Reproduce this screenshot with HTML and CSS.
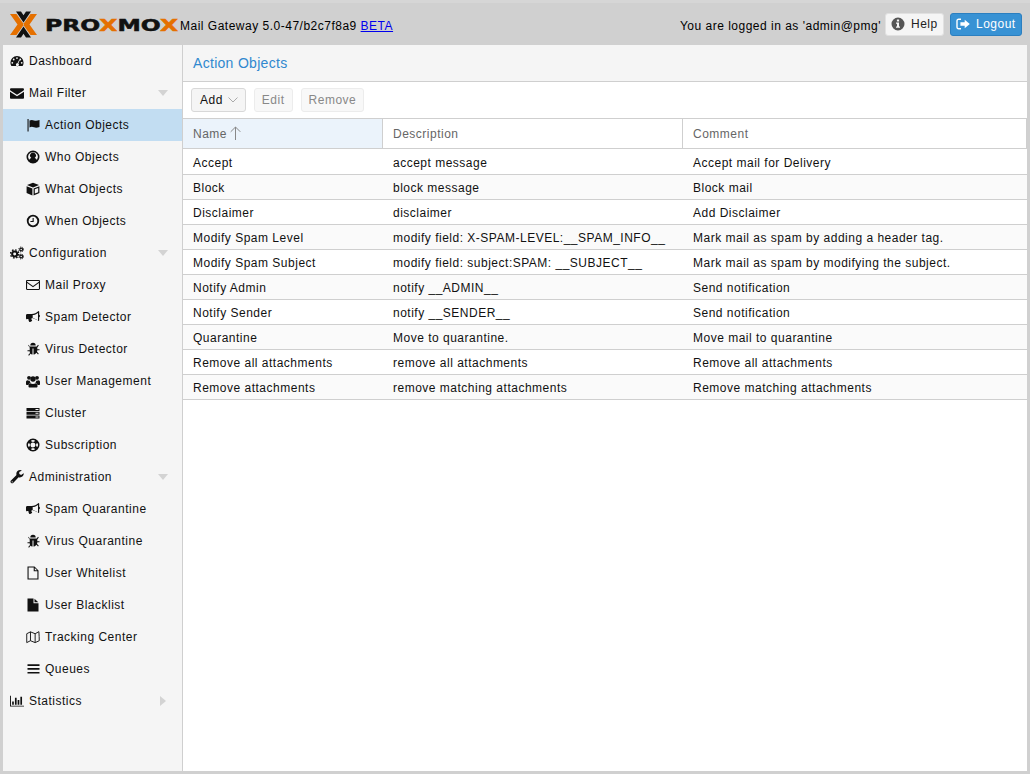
FILE: index.html
```html
<!DOCTYPE html>
<html lang="en">
<head>
    <meta charset="UTF-8">
    <title>Proxmox Mail Gateway</title>
    <link rel="stylesheet" href="styles.css">
</head>
<body>
    <svg class="defs" width="0" height="0">
        <symbol id="i-dashboard" viewBox="0 0 14 14"><path fill-rule="evenodd" d="M7 2a6.6 6.6 0 0 0-6.6 6.7c0 1.300.4 2.400 1 3.300h11.200c.6-.9 1-2 1-3.300A6.600 6.600 0 0 0 7 2zM7 3.200a.9.9 0 1 1 0 1.800.9.9 0 0 1 0-1.800zM3.700 4.600a.9.9 0 1 1 0 1.800.9.9 0 0 1 0-1.800zM10.300 4.600a.9.9 0 1 1 0 1.800.9.9 0 0 1 0-1.800zM2.300 7.900a.9.9 0 1 1 0 1.800.9.9 0 0 1 0-1.800zM11.700 7.900a.9.9 0 1 1 0 1.800.9.9 0 0 1 0-1.800zM9.300 5.500l.7.300-1.700 3.700a1.500 1.500 0 1 1-.8-.3z"/></symbol>
        <symbol id="i-envelope" viewBox="0 0 14 14"><path d="M1.200 2.200h11.600c.6 0 1.200.5 1.200 1.200 0 .5-.3 1-.8 1.300L7 8.700.8 4.700C.3 4.400 0 3.900 0 3.400c0-.7.600-1.200 1.200-1.200zM0 5.700l7 4.500 7-4.500v6c0 .6-.5 1.100-1.200 1.100H1.200C.5 12.800 0 12.300 0 11.700z"/></symbol>
        <symbol id="i-flag" viewBox="0 0 14 14"><path d="M1.500 1h1.100v12.500H1.500zM3.500 2.600c1.500-.9 3-.9 4.500-.2s3 .6 5.500-.3v6.800c-2.500 1-4 1-5.500.3S5 8.500 3.500 9.400z"/></symbol>
        <symbol id="i-user" viewBox="0 0 14 14"><path fill-rule="evenodd" d="M7 .5a6.500 6.500 0 1 1 0 13 6.500 6.500 0 0 1 0-13zM7 2a5 5 0 0 0-3.900 8.100c.5-1.300 1.300-2 2.200-2.200a2.900 2.900 0 1 1 3.400 0c.9.200 1.700.9 2.200 2.200A5 5 0 0 0 7 2z"/></symbol>
        <symbol id="i-cube" viewBox="0 0 14 14"><path d="M7 .8l6 2.300L7 5.500 1 3.100zM.6 4.200l5.800 2.300v7L.6 11zM7.600 6.500l5.800-2.300V11l-5.800 2.500zM8.800 7.300v4.300l3.400-1.400V6z"/></symbol>
        <symbol id="i-clock" viewBox="0 0 14 14"><path fill-rule="evenodd" d="M7 .8a6.200 6.200 0 1 1 0 12.400A6.200 6.200 0 0 1 7 .8zM7 2.600a4.400 4.400 0 1 0 0 8.800 4.400 4.400 0 0 0 0-8.800zM6.600 3.900h1.100v4H4.400V6.900h2.200z"/></symbol>
        <symbol id="i-cogs" viewBox="0 0 15 14"><circle cx="5" cy="8" r="2.700" fill="none" stroke="currentColor" stroke-width="2.200"/><circle cx="5" cy="8" r="4.400" fill="none" stroke="currentColor" stroke-width="1.500" stroke-dasharray="1.700 1.750"/><circle cx="12" cy="3.200" r="1.500" fill="none" stroke="currentColor" stroke-width="1.300"/><circle cx="12" cy="3.200" r="2.600" fill="none" stroke="currentColor" stroke-width="1" stroke-dasharray="1.100 1"/><circle cx="12" cy="10.800" r="1.500" fill="none" stroke="currentColor" stroke-width="1.300"/><circle cx="12" cy="10.800" r="2.600" fill="none" stroke="currentColor" stroke-width="1" stroke-dasharray="1.100 1"/></symbol>
        <symbol id="i-envelope-o" viewBox="0 0 14 14"><path fill-rule="evenodd" d="M1.200 2h11.600c.7 0 1.200.5 1.200 1.200v7.600c0 .7-.5 1.200-1.200 1.200H1.200C.5 12 0 11.500 0 10.800V3.200C0 2.500.5 2 1.200 2zM1.100 3.100v.7L7 8l5.900-4.200v-.7zM12.900 5.100L7 9.300 1.100 5.100v5.800h11.800z"/></symbol>
        <symbol id="i-bullhorn" viewBox="0 0 14 14"><path fill-rule="evenodd" d="M12.500 1c.4 0 .7.300.7.700v3.100c.5.200.8.600.8 1.200s-.3 1-.8 1.200v3.100c0 .4-.3.700-.7.700-2-1.700-4.200-2.700-6.400-2.900-.6.200-.8.900-.6 1.400.2.400.4.700.7 1-.2.500-.7.900-1.300 1-.4.500-1 .6-1.500.4-.7-.7-1-1.800-1-2.900H1.300C.6 9.500 0 8.900 0 8.200V5.300C0 4.600.600 4 1.300 4h4.400c2.500 0 4.800-1 6.800-3zM12 2.900C10.400 4.100 8.600 4.900 6.700 5.100v3.300c1.900.2 3.700 1 5.300 2.200z"/></symbol>
        <symbol id="i-bug" viewBox="0 0 14 14"><path d="M4.300 3.400a2.700 2.700 0 0 1 5.400 0zM3.300 4.400h7.400l1.300-1.600.8.700-1.500 1.900v1.800h2.200v1h-2.200c0 .6-.1 1.100-.3 1.600l1.800 1.900-.8.700-1.500-1.700C9.500 11.800 8.600 12.500 7.500 12.600V6.500h-1v6.100c-1.100-.1-2-.8-2-.8l-1.500 1.900-.8-.7 1.800-2.100c-.2-.5-.3-1-.3-1.600H1.500v-1h2.200V5.400L2.200 3.500l.8-.7z"/></symbol>
        <symbol id="i-users" viewBox="0 0 14 14"><circle cx="3" cy="3.800" r="1.900"/><circle cx="11" cy="3.800" r="1.900"/><circle cx="7" cy="5" r="2.700"/><path d="M3.700 6.500c0 .9.400 1.700 1 2.200-1.100.3-1.900 1.100-2.300 2.200H1c-.6 0-1-.3-1-1V8c0-1 .7-1.800 1.600-1.800.4.300.9.500 1.400.5.300 0 .5 0 .7-.2zM10.300 6.500c.2.100.4.200.7.200.5 0 1-.2 1.400-.5.900 0 1.600.8 1.600 1.800v1.900c0 .7-.4 1-1 1h-1.400c-.4-1.100-1.200-1.900-2.300-2.200.6-.5 1-1.300 1-2.200zM4.400 9.200c.7.500 1.600.8 2.600.8s1.900-.3 2.600-.8c1.200.2 1.900 1.300 1.900 2.600v.7c0 .7-.5 1-1.200 1H3.700c-.7 0-1.200-.3-1.200-1v-.7c0-1.300.7-2.400 1.900-2.600z"/></symbol>
        <symbol id="i-server" viewBox="0 0 14 14"><path fill-rule="evenodd" d="M.5 2h13v3h-13zM.5 5.700h13v3h-13zM.5 9.400h13v3h-13zM9.500 3v1h3V3zM9.500 6.700v1h3v-1zM9.500 10.400v1h3v-1z"/></symbol>
        <symbol id="i-lifering" viewBox="0 0 14 14"><path fill-rule="evenodd" d="M7 .5a6.500 6.500 0 1 1 0 13 6.500 6.500 0 0 1 0-13zM7 4.500a2.500 2.500 0 1 0 0 5 2.500 2.500 0 0 0 0-5zM5.200 2.300L5.800 4a3.300 3.300 0 0 1 2.400 0l.6-1.700a5 5 0 0 0-3.600 0zM2.300 5.200A5 5 0 0 0 2.300 8.800L4 8.200a3.300 3.300 0 0 1 0-2.400zM11.700 5.200L10 5.800a3.300 3.300 0 0 1 0 2.400l1.700.6a5 5 0 0 0 0-3.600zM5.800 10l-.6 1.700a5 5 0 0 0 3.600 0L8.200 10a3.300 3.300 0 0 1-2.400 0z"/></symbol>
        <symbol id="i-wrench" viewBox="0 0 14 14"><path fill-rule="evenodd" d="M13.800 3.600c0 2.200-1.700 3.900-3.900 3.900-.5 0-.9-.1-1.300-.2l-5.200 5.500c-.7.700-1.800.7-2.400 0-.7-.7-.7-1.800 0-2.400l5.500-5.300c-.1-.4-.2-.8-.2-1.300C6.300 1.700 8.200 0 10.200 0c.6 0 1.200.2 1.700.5L9.300 2v2l1.800 1 2.500-1.700c.1.100.2.200.2.300zM2.200 11.200a.6.600 0 1 0 0 1.200.6.600 0 0 0 0-1.200z"/></symbol>
        <symbol id="i-file-o" viewBox="0 0 14 14"><path fill-rule="evenodd" d="M1.500 .5h7l4 4v9h-11zM2.600 1.600v10.800h8.800V5.300H7.700V1.600zM8.800 1.900v2.300h2.300z"/></symbol>
        <symbol id="i-file" viewBox="0 0 14 14"><path d="M1.500 .5h6v4.700h5v8.300h-11zM8.500 .7l3.800 3.500H8.500z"/></symbol>
        <symbol id="i-map" viewBox="0 0 15 14"><path fill="none" stroke="currentColor" stroke-width="1" d="M.8 3.500l4-2 5 2 4-2.200c.3 3.500.4 7 .4 9.700l-4.400 2-5-2-4 2c0-3.200-.1-6.400 0-9.500zM4.800 1.500v9.500M9.800 3.500V13"/></symbol>
        <symbol id="i-bars" viewBox="0 0 14 14"><path d="M1.500 2.300h12v1.700h-12zM1.500 6.100h12v1.700h-12zM1.500 9.900h12v1.700h-12z"/></symbol>
        <symbol id="i-chart" viewBox="0 0 15 14"><path d="M0 1.500h1v10.500h14v1H0zM2.300 7.500h1.800v3.500H2.300zM5.300 3.500h1.800v7.500H5.300zM8.200 6h1.800v5H8.200zM11.100 2.500h1.800v8.500h-1.800z"/></symbol>
        <symbol id="i-info" viewBox="0 0 14 14"><path fill-rule="evenodd" d="M7 .5a6.500 6.500 0 1 1 0 13 6.500 6.500 0 0 1 0-13zM5.900 2.500v1.900h2.200V2.500zM5 5.500v1.300h1v2.700H5v1.300h4V9.500H8V5.500z"/></symbol>
        <symbol id="i-signout" viewBox="0 0 14 14"><path d="M5 1.500v1.400H2.700c-.6 0-1 .4-1 1v6.200c0 .6.400 1 1 1H5v1.400H2.700C1.200 12.500.3 11.600.3 10.100V3.900C.3 2.400 1.200 1.500 2.700 1.500zM8.700 2.800L13.800 7l-5.100 4.200V8.800H4.400V5.200h4.300z"/></symbol>
    </svg>

    <div class="header">
        <svg class="logo" width="170" height="27" viewBox="0 0 170 27">
            <path class="logo-orange" d="M0 3h6.500L14 13.500 6.500 24H0l7.500-10.500zM27 3h-6.500L13 13.500 20.500 24H27l-7.500-10.500z"/>
            <path class="logo-black" d="M6 .5h5l2.500 3.800L16 .5h5l-7.500 11zM6 26.500h5l2.500-3.800 2.500 3.800h5l-7.500-11z"/>
            <text class="logo-word" x="35" y="20" textLength="133" lengthAdjust="spacingAndGlyphs">PRO<tspan class="logo-x">X</tspan>MO<tspan class="logo-x">X</tspan></text>
        </svg>
        <span class="version">Mail Gateway 5.0-47/b2c7f8a9 <a href="#">BETA</a></span>
        <span class="logged">You are logged in as 'admin@pmg'</span>
        <button class="btn-help"><svg class="ico-sm"><use href="#i-info"/></svg>Help</button>
        <button class="btn-logout"><svg class="ico-sm"><use href="#i-signout"/></svg>Logout</button>
    </div>

    <div class="main">
        <div class="nav">
            <div class="nav-item"><svg class="ico"><use href="#i-dashboard"/></svg>Dashboard</div>
            <div class="nav-item"><svg class="ico"><use href="#i-envelope"/></svg>Mail Filter<i class="arrow-down"></i></div>
            <div class="nav-item sub selected"><svg class="ico"><use href="#i-flag"/></svg>Action Objects</div>
            <div class="nav-item sub"><svg class="ico"><use href="#i-user"/></svg>Who Objects</div>
            <div class="nav-item sub"><svg class="ico"><use href="#i-cube"/></svg>What Objects</div>
            <div class="nav-item sub"><svg class="ico"><use href="#i-clock"/></svg>When Objects</div>
            <div class="nav-item"><svg class="ico"><use href="#i-cogs"/></svg>Configuration<i class="arrow-down"></i></div>
            <div class="nav-item sub"><svg class="ico"><use href="#i-envelope-o"/></svg>Mail Proxy</div>
            <div class="nav-item sub"><svg class="ico"><use href="#i-bullhorn"/></svg>Spam Detector</div>
            <div class="nav-item sub"><svg class="ico"><use href="#i-bug"/></svg>Virus Detector</div>
            <div class="nav-item sub"><svg class="ico"><use href="#i-users"/></svg>User Management</div>
            <div class="nav-item sub"><svg class="ico"><use href="#i-server"/></svg>Cluster</div>
            <div class="nav-item sub"><svg class="ico"><use href="#i-lifering"/></svg>Subscription</div>
            <div class="nav-item"><svg class="ico"><use href="#i-wrench"/></svg>Administration<i class="arrow-down"></i></div>
            <div class="nav-item sub"><svg class="ico"><use href="#i-bullhorn"/></svg>Spam Quarantine</div>
            <div class="nav-item sub"><svg class="ico"><use href="#i-bug"/></svg>Virus Quarantine</div>
            <div class="nav-item sub"><svg class="ico"><use href="#i-file-o"/></svg>User Whitelist</div>
            <div class="nav-item sub"><svg class="ico"><use href="#i-file"/></svg>User Blacklist</div>
            <div class="nav-item sub"><svg class="ico"><use href="#i-map"/></svg>Tracking Center</div>
            <div class="nav-item sub"><svg class="ico"><use href="#i-bars"/></svg>Queues</div>
            <div class="nav-item"><svg class="ico"><use href="#i-chart"/></svg>Statistics<i class="arrow-right"></i></div>
        </div>

        <div class="content">
            <div class="title">Action Objects</div>
            <div class="toolbar">
                <button class="btn btn-add">Add<svg class="chevron" width="10" height="6" viewBox="0 0 10 6"><path d="M.5.5L5 5 9.500.5"/></svg></button>
                <button class="btn disabled">Edit</button>
                <button class="btn disabled">Remove</button>
            </div>
            <table class="grid">
                <thead>
                    <tr>
                        <th class="col-name sorted">Name<svg class="sort" width="11" height="14" viewBox="0 0 11 14"><path d="M5.500 14V1M.7 5.800L5.500 1l4.800 4.800"/></svg></th>
                        <th class="col-desc">Description</th>
                        <th>Comment</th>
                    </tr>
                </thead>
                <tbody>
                    <tr><td>Accept</td><td>accept message</td><td>Accept mail for Delivery</td></tr>
                    <tr><td>Block</td><td>block message</td><td>Block mail</td></tr>
                    <tr><td>Disclaimer</td><td>disclaimer</td><td>Add Disclaimer</td></tr>
                    <tr><td>Modify Spam Level</td><td>modify field: X-SPAM-LEVEL:__SPAM_INFO__</td><td>Mark mail as spam by adding a header tag.</td></tr>
                    <tr><td>Modify Spam Subject</td><td>modify field: subject:SPAM: __SUBJECT__</td><td>Mark mail as spam by modifying the subject.</td></tr>
                    <tr><td>Notify Admin</td><td>notify __ADMIN__</td><td>Send notification</td></tr>
                    <tr><td>Notify Sender</td><td>notify __SENDER__</td><td>Send notification</td></tr>
                    <tr><td>Quarantine</td><td>Move to quarantine.</td><td>Move mail to quarantine</td></tr>
                    <tr><td>Remove all attachments</td><td>remove all attachments</td><td>Remove all attachments</td></tr>
                    <tr><td>Remove attachments</td><td>remove matching attachments</td><td>Remove matching attachments</td></tr>
                </tbody>
            </table>
        </div>
    </div>
</body>
</html>
```

FILE: styles.css
```css
* {
    box-sizing: border-box;
}
html, body {
    height: 100%;
}
body {
    font-family: "Liberation Sans", Arial, sans-serif;
    font-size: 12px;
    letter-spacing: 0.5px;
    color: #000;
    margin: 0;
    padding: 0 3px 3px;
    background-color: #d0d0d0;
    display: flex;
    flex-direction: column;
    overflow: hidden;
}
.defs {
    position: absolute;
}
.header {
    height: 45px;
    flex: none;
    display: flex;
    align-items: center;
    padding: 3px 8px 0 10px;
    border-top: 3px solid #d6d6d6;
    margin: 0 -3px;
}
.logo {
    flex: none;
    margin-top: -3px;
}
.logo-orange {
    fill: #e57000;
}
.logo-black {
    fill: #111;
}
.logo-word {
    font-family: "DejaVu Sans", sans-serif;
    font-weight: bold;
    font-size: 16.5px;
    letter-spacing: 0;
    fill: #111;
    stroke: #111;
    stroke-width: 0.5px;
}
.logo-x {
    fill: #e57000;
    stroke: #e57000;
}
.version a {
    color: #0000ee;
}
.logged {
    margin-left: auto;
    margin-right: 4px;
}
.btn-help, .btn-logout {
    font: inherit;
    letter-spacing: inherit;
    height: 23px;
    display: flex;
    align-items: center;
    gap: 6px;
    padding: 0 8px 0 5px;
    border-radius: 3px;
    margin-top: -3px;
}
.btn-help {
    background-color: #f5f5f5;
    border: 1px solid #e1e1e1;
    color: #222;
    width: 59px;
}
.btn-logout {
    background-color: #3892d4;
    border: 1px solid #2b7fc0;
    color: #fff;
    width: 72px;
    margin-left: 6px;
}
.ico-sm {
    width: 14px;
    height: 14px;
    fill: currentColor;
    flex: none;
}
.btn-help .ico-sm {
    color: #555;
}
.main {
    flex: 1;
    display: flex;
    min-height: 0;
}
.nav {
    width: 180px;
    flex: none;
    background-color: #f5f5f5;
    border-right: 1px solid #cfcfcf;
}
.nav-item {
    height: 32px;
    display: flex;
    align-items: center;
    padding-left: 7px;
    color: #111;
    position: relative;
}
.nav-item.sub {
    padding-left: 23px;
}
.nav-item.selected {
    background-color: #c2ddf2;
}
.ico {
    width: 14px;
    height: 14px;
    fill: currentColor;
    margin-right: 5px;
    flex: none;
}
.arrow-down {
    position: absolute;
    right: 14px;
    top: 13px;
    border: 5px solid transparent;
    border-top: 6px solid #d3d3d3;
    border-bottom: 0;
}
.arrow-right {
    position: absolute;
    right: 16px;
    top: 11px;
    border: 5px solid transparent;
    border-left: 6px solid #d3d3d3;
    border-right: 0;
}
.content {
    flex: 1;
    background-color: #fff;
    min-width: 0;
}
.title {
    height: 37px;
    background-color: #f5f5f5;
    border-bottom: 1px solid #cfcfcf;
    color: #3088cf;
    font-size: 14px;
    letter-spacing: 0.3px;
    padding: 0 10px;
    display: flex;
    align-items: center;
}
.toolbar {
    height: 37px;
    display: flex;
    align-items: center;
    gap: 8px;
    padding: 0 8px;
    border-bottom: 1px solid #cfcfcf;
}
.btn {
    font: inherit;
    letter-spacing: inherit;
    height: 24px;
    padding: 0 7px;
    border-radius: 3px;
    background-color: #f5f5f5;
    border: 1px solid #d8d8d8;
    color: #111;
    display: flex;
    align-items: center;
}
.btn-add {
    padding-left: 8px;
}
.btn.disabled {
    border-color: #ececec;
    background-color: #f8f8f8;
    color: #888;
}
.chevron {
    margin-left: 5px;
    fill: none;
    stroke: #aaa;
}
.grid {
    width: 100%;
    table-layout: fixed;
    border-collapse: separate;
    border-spacing: 0;
}
.grid th {
    height: 30px;
    padding: 0 10px;
    text-align: left;
    font-weight: normal;
    color: #666;
    border-right: 1px solid #cfcfcf;
    border-bottom: 1px solid #cfcfcf;
}
.col-name {
    width: 200px;
}
.col-desc {
    width: 300px;
}
.grid th.sorted {
    background-color: #ebf3fb;
}
.sort {
    margin-left: 3px;
    vertical-align: -2px;
    fill: none;
    stroke: #888;
}
.grid td {
    height: 25px;
    padding: 2px 10px 0;
    border-bottom: 1px solid #cfcfcf;
    white-space: nowrap;
    color: #111;
}
.grid tbody tr:first-child td {
    height: 26px;
}
.grid tbody tr:nth-child(even) {
    background-color: #fafafa;
}
```
